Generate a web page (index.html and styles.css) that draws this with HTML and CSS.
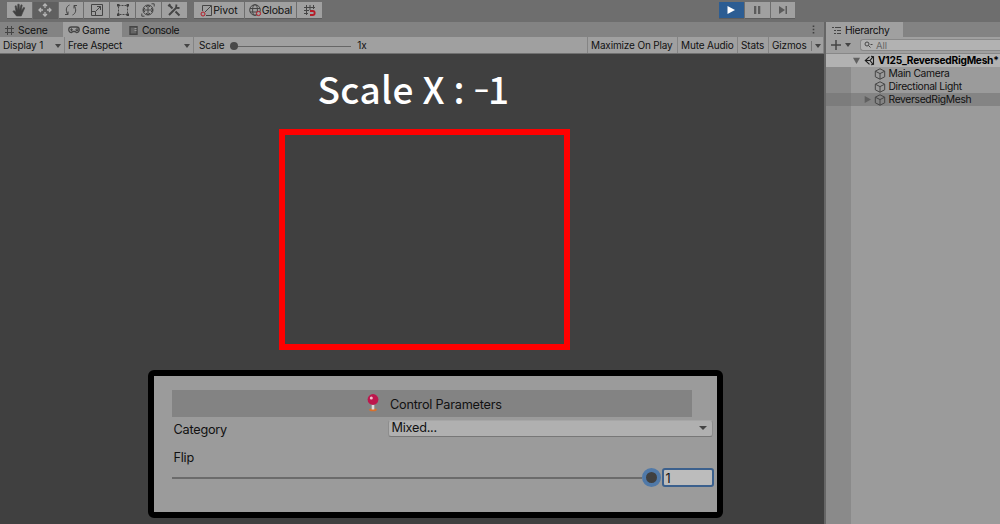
FILE: index.html
```html
<!DOCTYPE html>
<html lang="en">
<head>
<meta charset="utf-8">
<title>Editor</title>
<link rel="stylesheet" href="styles.css">
</head>
<body>
<div class="editor">
  <header class="toolbar">
    <div class="tools">
      <button class="btn"><svg width="14" height="14" viewBox="0 0 14 14"><path d="M4.500 13 1 8.500l.8-.9L4 9 3 3l1.200-.3L5.600 7 5.800 1.200h1.400L7.500 7 9 1.800l1.200.3L9.300 7.700l2.500-3.500 1 .7L10.500 10 9.300 13z" fill="#404040" stroke-width=".6"/></svg></button>
      <button class="btn dark"><svg class="light" width="14" height="14" viewBox="0 0 14 14"><path d="M7 1v4M7 9v4M1 7h4M9 7h4M5 3l2-2 2 2M5 11l2 2 2-2M3 5 1 7l2 2M11 5l2 2-2 2" stroke-width="1.300"/></svg></button>
      <button class="btn"><svg width="14" height="14" viewBox="0 0 14 14"><path d="M5.500 2C2 3.500 1.300 7.500 3.800 11.500M1 11.500h3V8.500M8.500 12C12 10.500 12.700 6.500 10.200 2.500M13 2.500h-3v3"/></svg></button>
      <button class="btn"><svg width="14" height="14" viewBox="0 0 14 14"><path d="M1.500 1.500h11v11h-11zM6 8l4.500-4.500M7 3.500h3.500V7M1.500 8.500h4v4"/></svg></button>
      <button class="btn"><svg width="14" height="14" viewBox="0 0 14 14"><path d="M2.500 2.500h9v9h-9z" stroke-dasharray="2 1"/><path class="solid" d="M1 1h2.500v2.500H1zM10.500 1H13v2.500h-2.500zM1 10.500h2.500V13H1zM10.500 10.500H13V13h-2.500z"/></svg></button>
      <button class="btn"><svg width="14" height="14" viewBox="0 0 14 14"><circle cx="7" cy="7" r="5"/><path d="M7 2v10M2 7h10M5 4l2-2 2 2M5 10l2 2 2-2M4 5 2 7l2 2M10 5l2 2-2 2M10.500.8h2.700v2.700M3.500 13.200H.8v-2.700"/></svg></button>
      <button class="btn"><svg width="14" height="14" viewBox="0 0 14 14"><path d="m2 2 3.500 3.500M8.500 8.500l4 4M2 12l7-7" stroke-width="2"/><path d="M9.500 1.500 9 4.800l3.500.2M1.200 3.200l2-2" stroke-width="1.800"/></svg></button>
    </div>
    <div class="tools handles">
      <button class="btn pivot"><svg width="13" height="13" viewBox="0 0 13 13"><path d="M2.500 7V1.500h9v10H6M5 8l6-6"/><circle cx="3" cy="10" r="2" stroke="#b51c28"/></svg><span>Pivot</span></button>
      <button class="btn global"><svg width="13" height="13" viewBox="0 0 13 13"><circle cx="6" cy="6" r="5.300"/><ellipse cx="6" cy="6" rx="2.400" ry="5.300"/><path d="M1 4.500h10M1 8h10"/><circle cx="9.500" cy="9.500" r="2.100" fill="#a0a0a0" stroke="#b51c28"/></svg><span>Global</span></button>
      <button class="btn snap"><svg width="13" height="13" viewBox="0 0 13 13"><path d="M3.500 1v10M7 1v5M10.500 1v4M1 3.500h11M1 6.500h5M1 9.500h4"/><path d="M7 7h2.700a2 2 0 0 1 0 4H7" stroke="#b51c28" stroke-width="1.800"/></svg></button>
    </div>
    <div class="tools playback">
      <button class="btn play"><svg width="14" height="14" viewBox="0 0 14 14"><path class="solid" d="m3.500 3 7.500 4-7.500 4z"/></svg></button>
      <button class="btn"><svg width="14" height="14" viewBox="0 0 14 14"><path class="grey" d="M4 3h2.300v8H4zM8 3h2.300v8H8z"/></svg></button>
      <button class="btn"><svg width="14" height="14" viewBox="0 0 14 14"><path class="grey" d="m3 3 6 4-6 4zM9.500 3H11v8H9.500z"/></svg></button>
    </div>
  </header>

  <main class="workspace">
    <section class="game">
      <nav class="tabs">
        <div class="tab scene"><svg width="9" height="9" viewBox="0 0 9 9"><path d="M2.500 0v9M6.500 0v9M0 2.500h9M0 6.500h9"/></svg><span>Scene</span></div>
        <div class="tab active"><svg width="12" height="8" viewBox="0 0 12 8"><path d="M3.500 1h5a2.500 2.500 0 0 1 0 5.500L7 5.500H5L3.500 6.500a2.500 2.500 0 0 1 0-5.500z" stroke-width="1.300"/><path d="M2 3.800h3M3.500 2.300v3M8 3h2v1.500H8z"/></svg><span>Game</span></div>
        <div class="tab console"><svg width="9" height="9" viewBox="0 0 9 9"><path d="M1 .7h7v7.600H1z" stroke-width="1.400" fill="#666"/><path d="M5.500 2.500h2M5.500 4.500h2" stroke="#999"/></svg><span>Console</span></div>
        <svg class="more" width="3" height="9" viewBox="0 0 3 9"><path class="solid" d="M.7.5h1.600v1.600H.7zM.7 3.700h1.600v1.600H.7zM.7 6.900h1.600v1.600H.7z"/></svg>
      </nav>
      <div class="options">
        <div class="cell display"><span>Display 1</span><i class="caret"></i></div>
        <div class="cell aspect"><span>Free Aspect</span><i class="caret"></i></div>
        <div class="cell scale"><span>Scale</span><div class="track"><i></i></div><span>1x</span></div>
        <div class="cell maximize">Maximize On Play</div>
        <div class="cell mute">Mute Audio</div>
        <div class="cell stats">Stats</div>
        <div class="cell gizmos"><span>Gizmos</span><i class="bar"></i><i class="caret"></i></div>
      </div>
      <div class="view">
        <h1>Scale X : <span class="minus">-</span>1</h1>
        <div class="frame"></div>
        <div class="panel">
          <div class="heading"><svg width="14" height="18" viewBox="0 0 14 18"><ellipse cx="7" cy="15.700" rx="3.800" ry="1.500" fill="#d7702e"/><path d="M7 9v6.500" stroke="#ddd" stroke-width="2.600"/><circle cx="7" cy="5.500" r="5.400" fill="#bd174d"/><circle cx="5.300" cy="4" r="1.500" fill="#f3bfcd"/></svg><span>Control Parameters</span></div>
          <div class="row"><label>Category</label><div class="select"><span>Mixed...</span><i class="caret"></i></div></div>
          <div class="flip">Flip</div>
          <div class="slider"><div class="line"></div><i class="knob"></i><div class="input">1</div></div>
        </div>
      </div>
    </section>

    <aside class="hierarchy">
      <nav class="tabs"><div class="tab active"><svg width="10" height="9" viewBox="0 0 10 9"><path d="M0 1.500h2M3 1.500h6M2 4.500h2M5 4.500h4M2 7.500h2M5 7.500h4"/></svg><span>Hierarchy</span></div></nav>
      <div class="search-row">
        <svg width="10" height="10" viewBox="0 0 10 10"><path d="M5 0v10M0 5h10" stroke-width="1.500"/></svg><i class="caret"></i>
        <div class="search"><svg width="9" height="8" viewBox="0 0 9 8"><circle cx="3" cy="3" r="2"/><path d="m4.500 4.500 2 2M6.500 3.500h2"/></svg><span>All</span></div>
      </div>
      <div class="tree">
        <div class="item root"><i class="tri down"></i><svg width="11" height="11" viewBox="0 0 11 11"><path d="M5.500 1.700 1.300 5.500l4.200 3.800M7 1.200l2.500.6v7.400L7 9.800M1.500 5.500H6l2.700-3.300M6 5.500l2.700 3.300" stroke="#1c1c1c" stroke-width="1.100"/></svg><span>V125_ReversedRigMesh*</span></div>
        <div class="item"><i class="tri none"></i><svg class="cube" width="12" height="12" viewBox="0 0 12 12"><path d="m6 .8 4.700 2.400v5.600L6 11.200 1.300 8.800V3.200zM1.300 3.200 6 5.600l4.700-2.400M6 5.600v5.600"/></svg><span>Main Camera</span></div>
        <div class="item"><i class="tri none"></i><svg class="cube" width="12" height="12" viewBox="0 0 12 12"><path d="m6 .8 4.700 2.400v5.600L6 11.200 1.300 8.800V3.200zM1.300 3.200 6 5.600l4.700-2.400M6 5.600v5.600"/></svg><span>Directional Light</span></div>
        <div class="item selected"><i class="tri right"></i><svg class="cube" width="12" height="12" viewBox="0 0 12 12"><path d="m6 .8 4.700 2.400v5.600L6 11.200 1.300 8.800V3.200zM1.300 3.200 6 5.600l4.700-2.400M6 5.600v5.600"/></svg><span>ReversedRigMesh</span></div>
      </div>
    </aside>
  </main>
</div>
</body>
</html>
```
FILE: styles.css
```css
* { box-sizing: border-box; }
body { margin: 0; font: 10.3px/13px Inter, "Liberation Sans", sans-serif; color: #111; }
svg { flex: none; fill: none; stroke: #454545; stroke-width: 1; }
.solid { fill: #404040; stroke: none; }
.grey { fill: #5b5b5b; stroke: none; }
.light { stroke: #b5b5b5; }
.editor { width: 1000px; height: 524px; display: flex; flex-direction: column; background: #6e6e6e; overflow: hidden; }
.toolbar { height: 22px; flex: none; display: flex; align-items: flex-start; padding: 2px 0 0 7px; }
.tools { display: flex; gap: 1px; }
.btn { width: 24.8px; height: 16px; border: 0; padding: 0; margin: 0; background: #a0a0a0; display: flex; align-items: center; justify-content: center; font: inherit; font-size: 10.500px; color: #111; box-shadow: 0 1px #5e5e5e; }
.btn.dark { background: #606060; }
.handles { margin-left: 7.400px; }
.btn.pivot { width: 50px; gap: 0; }
.btn.global { width: 51px; gap: 0; letter-spacing: -.2px; }
.btn.snap { width: 25px; }
.playback { margin-left: 397px; }
.btn.play { background: #2c5d93; }
.play .solid { fill: #fff; }

.workspace { flex: 1; display: flex; gap: 2px; min-height: 0; background: #666; }
.game { width: 824px; display: flex; flex-direction: column; }
.tabs { height: 15px; flex: none; display: flex; align-items: stretch; background: #838383; letter-spacing: -.2px; }
.tab { display: flex; align-items: center; gap: 4px; padding: 1px 0 0 5px; }
.tab.active { background: #a0a0a0; }
.game .tab.scene { width: 63px; }
.game .tab.active { width: 59px; gap: 2px; }
.game .tab.console { padding-left: 7px; letter-spacing: -.4px; }
.more { margin: 3px 9px 0 auto; }
.options { height: 17px; flex: none; display: flex; background: #a0a0a0; border-bottom: 1px solid #707070; }
.cell { border-right: 1px solid #848484; padding: 1px 0 0 3px; display: flex; align-items: center; white-space: nowrap; font-size: 10px; letter-spacing: -.15px; }
.caret { width: 0; height: 0; border: 3.500px solid transparent; border-top: 4px solid #444; border-bottom: 0; }
.display { width: 65px; justify-content: space-between; padding-right: 3px; }
.aspect { width: 129px; justify-content: space-between; padding-right: 3px; letter-spacing: -.25px; }
.scale { width: 394px; gap: 6px; padding-left: 5px; }
.track { width: 121px; height: 8px; display: flex; align-items: center; background: linear-gradient(#666, #666) 0 4px / 100% 1px no-repeat; }
.track i { width: 8px; height: 8px; border-radius: 50%; background: #494949; }
.maximize { width: 90px; }
.mute { width: 60px; }
.stats { width: 31px; }
.gizmos { flex: 1; }
.bar { width: 1px; height: 10px; background: #777; margin: 0 3px 0 4px; }

.view { flex: 1; display: flex; flex-direction: column; align-items: flex-start; background: #404040; min-height: 0; }
h1 { margin: 10px 0 0 317.500px; height: 65px; font: 500 37px/49px "Noto Sans CJK KR", "Noto Sans", sans-serif; color: #fff; white-space: pre; display: flex; letter-spacing: .35px; }
.minus { transform: translate(1px, -3.500px) scale(1.250, .8); margin-right: 1px; }
.frame { width: 291px; height: 221px; margin-left: 279px; border: 6px solid #f00; }
.panel { width: 575px; height: 148px; margin: 20px 0 0 148px; border: 6px solid #000; border-radius: 6px; background: #9b9b9b; padding: 14px 3px 0 18px; font-size: 12.700px; line-height: 18px; letter-spacing: -.23px; }
.heading { width: 520px; height: 26.500px; background: #838383; display: flex; align-items: center; padding: 3px 0 0 194px; gap: 10px; }
.heading svg { stroke: none; margin-top: -3px; }
.row { display: flex; align-items: flex-start; margin-top: 3px; }
.row label { width: 216px; padding: 1px 0 0 1.500px; }
.select { width: 325px; height: 17.500px; display: flex; align-items: center; justify-content: space-between; background: #b0b0b0; border: 1px solid #8d8d8d; border-top-color: #a6a6a6; border-bottom-color: #777; border-radius: 3px; padding: 0 5px 0 2.500px; }
.select .caret { border-width: 4px 4px 0; }
.flip { margin: 10px 0 0 1.500px; }
.slider { display: flex; align-items: center; height: 20px; margin-top: 1px; }
.line { width: 470px; height: 2px; background: #6b6b6b; }
.knob { width: 19px; height: 19px; border-radius: 50%; border: 4.500px solid #5079a8; background: #404040; }
.input { width: 52.500px; height: 19px; margin-left: .5px; border: 2px solid #3b608d; border-radius: 3px; background: #bcbcbc; padding-left: 2px; line-height: 17px; }

.hierarchy { flex: 1; display: flex; flex-direction: column; min-width: 0; background: #9b9b9b; }
.hierarchy .tab { width: 77px; padding-left: 6px; gap: 3px; letter-spacing: -.3px; }
.search-row { height: 17px; flex: none; display: flex; align-items: center; background: #a0a0a0; border-bottom: 1px solid #888; padding-left: 5px; gap: 4px; }
.search { flex: 1; height: 12px; display: flex; align-items: center; gap: 3px; margin-left: 5px; border: 1px solid #888; border-right: 0; border-radius: 3px 0 0 3px; background: #b2b2b2; color: #666; font-size: 9.500px; padding-left: 3px; }
.tree { flex: 1; background: linear-gradient(90deg, #8a8a8a 25.500px, #9b9b9b 25.500px); letter-spacing: -.33px; }
.item { height: 13px; display: flex; align-items: center; padding-left: 38px; gap: 2.500px; white-space: nowrap; }
.item.root { background: #b2b2b2; font-weight: 700; padding-left: 27px; gap: 3.500px; font-size: 10.200px; letter-spacing: -.26px; color: #000; }
.item.selected { background: linear-gradient(90deg, #7c7c7c 25.500px, #848484 25.500px); }
.cube { margin-left: .5px; }
.tri { width: 7px; height: 7px; flex: none; background: #606060; }
.tri.none { visibility: hidden; }
.down { clip-path: polygon(0 10%, 100% 10%, 50% 100%); }
.right { clip-path: polygon(10% 0, 100% 50%, 10% 100%); }
```
